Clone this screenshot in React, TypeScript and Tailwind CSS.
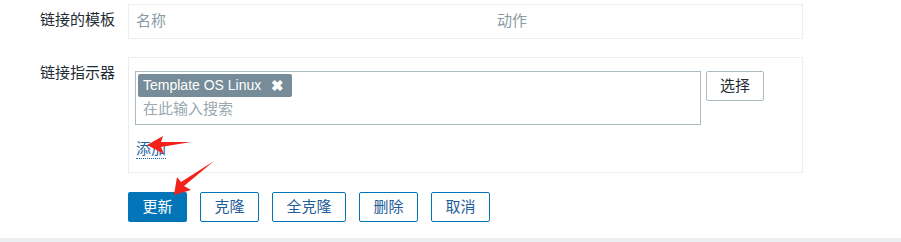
export default function App() {
  const buttons = [
    { label: "克隆", w: "w-[59px]" },
    { label: "全克隆", w: "w-[74px]" },
    { label: "删除", w: "w-[59px]" },
    { label: "取消", w: "w-[59px]" },
  ];

  return (
    <div className="relative w-[901px] h-[242px] overflow-hidden bg-white font-['Liberation_Sans','Noto_Sans_CJK_SC',sans-serif] text-[15px] text-[#1f2c33]">
      <div className="pt-[4px]">
        {/* 链接的模板 */}
        <div className="flex">
          <div className="w-[128px] pr-[13px] text-right leading-[32px]">链接的模板</div>
          <div className="w-[675px] h-[35px] border border-[#ebeef0] flex items-center text-[#8a9ba4]">
            <span className="w-[368px] pl-[7px]">名称</span>
            <span>动作</span>
          </div>
        </div>

        {/* 链接指示器 */}
        <div className="flex mt-[18px]">
          <div className="w-[128px] pr-[13px] text-right leading-[32px]">链接指示器</div>
          <div className="w-[675px] h-[116px] border border-[#ebeef0] pl-[6px] pt-[13px]">
            <div className="flex items-start gap-[5px]">
              <div className="w-[566px] h-[54px] border border-[#acbbc2] px-[2px] pt-[2px]">
                <span className="inline-flex items-center h-[23px] rounded-[2px] bg-[#768d99] text-white text-[14px] pl-[5px] pr-[8px]">
                  Template OS Linux
                  <span className="ml-[10px] text-[15px] font-bold leading-none">✖</span>
                </span>
                <div className="pl-[5px] leading-[24px] text-[#9aa8b0]">在此输入搜索</div>
              </div>
              <button className="w-[58px] h-[30px] border border-[#acbbc2] rounded-[2px] bg-white text-[#1f2c33]">
                选择
              </button>
            </div>
            <div className="mt-[13px] pl-[1px]">
              <span className="text-[#1f65a6] border-b border-dotted border-[#1f65a6] leading-[18px] inline-block">
                添加
              </span>
            </div>
          </div>
        </div>

        {/* 按钮 */}
        <div className="flex gap-[13px] pl-[128px] mt-[19px]">
          <button className="w-[59px] h-[30px] rounded-[2px] bg-[#0275b8] text-white">更新</button>
          {buttons.map((b) => (
            <button
              key={b.label}
              className={`${b.w} h-[30px] rounded-[2px] border border-[#0275b8] bg-white text-[#1f5d99]`}
            >
              {b.label}
            </button>
          ))}
        </div>
      </div>

      <div className="absolute left-0 right-0 bottom-0 h-[4px] bg-[#ebeef0]" />

      {/* 红色箭头 */}
      <svg className="absolute left-0 top-0 pointer-events-none" width="901" height="242">
        <path d="M147 145 L163 136 L161 142 L191 142 L161 147 L164 154 Z" fill="#f2211b" />
        <path d="M174 195 L177 177 L181 182 L214 161 L184 186 L191 190 Z" fill="#f2211b" />
      </svg>
    </div>
  );
}
